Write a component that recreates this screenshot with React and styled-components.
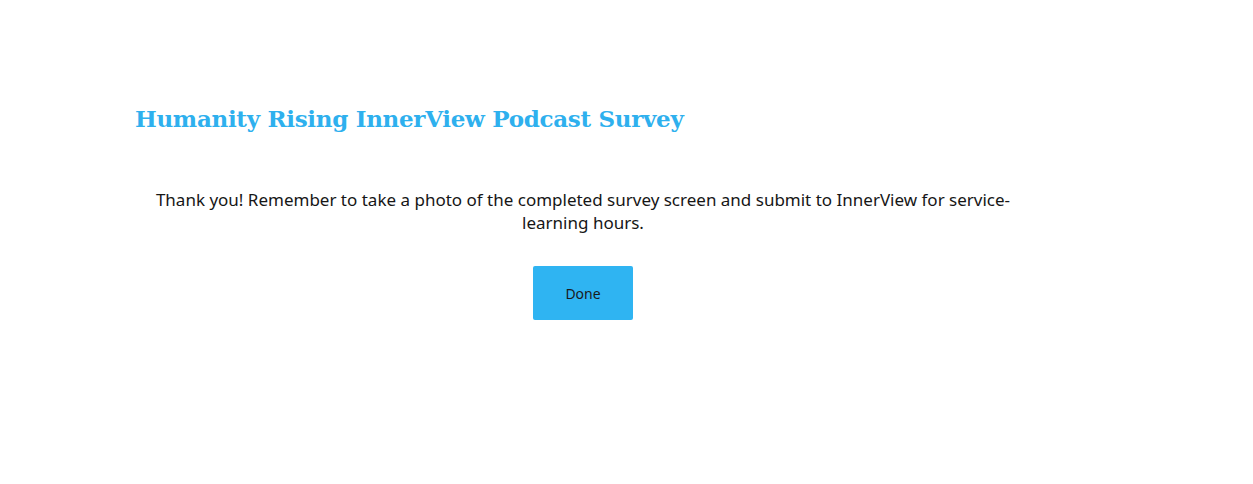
import React from 'react';
import styled, { createGlobalStyle } from 'styled-components';

const GlobalStyle = createGlobalStyle`
  body {
    margin: 0;
    background: #ffffff;
  }
`;

const Page = styled.div`
  width: 1253px;
  height: 484px;
  box-sizing: border-box;
  padding: 101px 0 0 135px;
`;

const Column = styled.div`
  width: 896px;
  display: flex;
  flex-direction: column;
`;

const Title = styled.h1`
  margin: 0;
  font-family: "DejaVu Serif", serif;
  font-weight: bold;
  font-size: 23px;
  letter-spacing: -0.3px;
  line-height: 36px;
  color: #2eb0ee;
`;

const Message = styled.p`
  margin: 51px 0 0;
  padding: 0 12px;
  font-family: "Noto Sans", sans-serif;
  font-size: 17px;
  line-height: 23px;
  color: #161616;
  text-align: center;
`;

const Actions = styled.div`
  display: flex;
  justify-content: center;
  margin-top: 32px;
`;

const Button = styled.button`
  width: 100px;
  height: 54px;
  border: none;
  border-radius: 2px;
  background: #2fb4f2;
  color: #1a1a1a;
  font-family: "Noto Sans", sans-serif;
  font-size: 14px;
  cursor: pointer;
`;

export default function App() {
  return (
    <>
      <GlobalStyle />
      <Page>
        <Column>
          <Title>Humanity Rising InnerView Podcast Survey</Title>
          <Message>
            Thank you! Remember to take a photo of the completed survey screen and submit to InnerView for service-learning hours.
          </Message>
          <Actions>
            <Button>Done</Button>
          </Actions>
        </Column>
      </Page>
    </>
  );
}
